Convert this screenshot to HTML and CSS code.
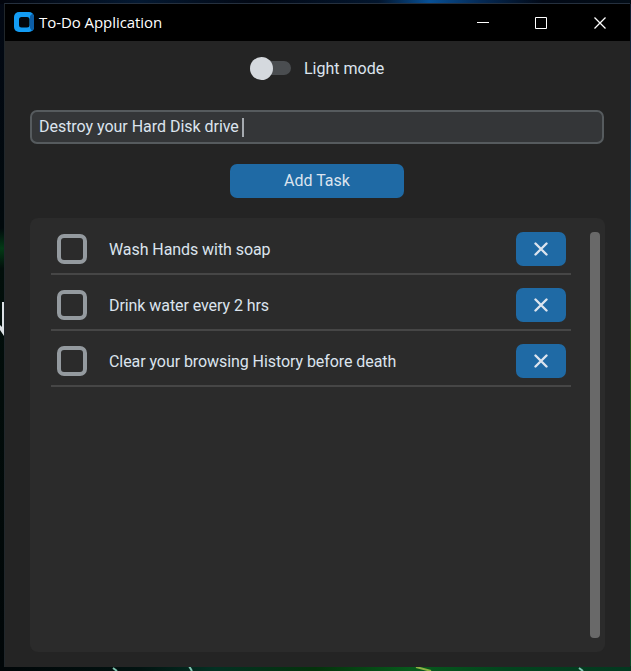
FILE: index.html
```
<!DOCTYPE html>
<html lang="en">
<head>
<meta charset="utf-8">
<title>To-Do Application</title>
<link rel="stylesheet" href="styles.css">
</head>
<body>
<svg class="wallpaper" viewBox="0 0 631 671" aria-hidden="true">
  <defs>
    <linearGradient id="top"><stop offset="0" stop-color="#01040c"/><stop offset=".22" stop-color="#041932"/><stop offset=".4" stop-color="#020814"/><stop offset=".6" stop-color="#03162e"/><stop offset=".68" stop-color="#075096"/><stop offset=".76" stop-color="#052b57"/><stop offset=".86" stop-color="#020916"/><stop offset="1" stop-color="#020c16"/></linearGradient>
    <linearGradient id="bottom"><stop offset="0" stop-color="#010608"/><stop offset=".22" stop-color="#021311"/><stop offset=".34" stop-color="#033123"/><stop offset=".5" stop-color="#04330c"/><stop offset=".65" stop-color="#075a1c"/><stop offset=".8" stop-color="#02451e"/><stop offset="1" stop-color="#033820"/></linearGradient>
    <linearGradient id="left" x2="0" y2="1"><stop offset="0" stop-color="#020814"/><stop offset=".34" stop-color="#01090c"/><stop offset=".37" stop-color="#033b16"/><stop offset=".4" stop-color="#020f0b"/><stop offset="1" stop-color="#010608"/></linearGradient>
    <linearGradient id="right" x2="0" y2="1"><stop offset="0" stop-color="#101a2c"/><stop offset=".35" stop-color="#14506a"/><stop offset=".5" stop-color="#244c1c"/><stop offset="1" stop-color="#0d4728"/></linearGradient>
  </defs>
  <path fill="url(#left)" d="M0 0h5v671H0z"/>
  <path fill="url(#right)" d="M629 0h2v671h-2z"/>
  <path fill="url(#top)" d="M0 0h631v4H0z"/>
  <path fill="url(#bottom)" d="M0 666h631v5H0z"/>
  <path fill="#dce0e4" d="M2 302h3v34H4L0 330v-5l2 2z"/>
  <path fill="none" stroke="#7fc4b0" stroke-width="2" d="M113 668l4 3M189 666l3 5M579 668l4 3"/>
  <path fill="none" stroke="#8fb345" stroke-width="2" d="M416 667l15 4"/>
</svg>
<main class="window">
  <header class="titlebar">
    <svg class="logo" viewBox="0 0 20 20" aria-hidden="true">
      <rect width="20" height="20" rx="5" fill="#139cf3"/>
      <path fill="#0c5da5" d="M16 4l2.500-2.500Q20 3 20 5v10q0 3-2 4l-2-3z"/>
      <rect x="5" y="5" width="10.500" height="10.500" rx="2.500" fill="#02070d"/>
    </svg>
    <h1>To-Do Application</h1>
    <svg class="controls" viewBox="0 0 131 14" aria-hidden="true">
      <path fill="none" stroke="#fff" d="M0 6.500h12M58.500 1.500h11v11h-11z"/>
      <path fill="none" stroke="#fff" stroke-width="1.300" d="M117.500 1.500l11 11M128.500 1.500l-11 11"/>
    </svg>
  </header>
  <div class="mode"><span class="switch"><span class="knob"></span></span><span class="mode-label">Light mode</span></div>
  <div class="entry"><span>Destroy your Hard Disk drive</span><span class="caret"></span></div>
  <button class="add">Add Task</button>
  <section class="panel">
    <ul class="tasks">
      <li><span class="check"></span><span class="label">Wash Hands with soap</span><button class="remove" aria-label="Remove"><svg viewBox="0 0 14 14"><path d="M1.500 1.500l11 11M12.500 1.500l-11 11"/></svg></button></li>
      <li><span class="check"></span><span class="label">Drink water every 2 hrs</span><button class="remove" aria-label="Remove"><svg viewBox="0 0 14 14"><path d="M1.500 1.500l11 11M12.500 1.500l-11 11"/></svg></button></li>
      <li><span class="check"></span><span class="label">Clear your browsing History before death</span><button class="remove" aria-label="Remove"><svg viewBox="0 0 14 14"><path d="M1.500 1.500l11 11M12.500 1.500l-11 11"/></svg></button></li>
    </ul>
    <div class="scrollbar"></div>
  </section>
</main>
</body>
</html>
```
FILE: styles.css
```
* { box-sizing: border-box; }
body {
  margin: 0;
  width: 631px;
  height: 671px;
  padding: 3px 1px 4px 4px;
  overflow: hidden;
  background: #01060c;
  color: #dce4ee;
  font: 16px/20px Roboto, sans-serif;
}
.wallpaper { position: absolute; inset: 0; width: 631px; height: 671px; z-index: -1; }
.window {
  height: 664px;
  display: flex;
  flex-direction: column;
  background: #242424;
  border-top: 1px solid #25303e;
  border-left: 1px solid #20262a;
}
.titlebar {
  height: 37px;
  flex: none;
  display: flex;
  align-items: center;
  padding: 0 22px 0 9px;
  background: #000;
  color: #fff;
}
.logo { width: 20px; height: 20px; margin-top: -1px; }
.titlebar h1 {
  margin: 0 auto 0 5px;
  padding-bottom: 2px;
  font: 400 15px/20px "Open Sans", sans-serif;
  letter-spacing: -0.06px;
}
.controls { width: 131px; height: 14px; }
.mode { display: flex; align-items: center; gap: 12px; height: 24px; margin: 15px 0 0 245px; }
.mode-label { padding: 2px 0 0 1px; }
.switch { display: flex; align-items: center; width: 41px; height: 14px; border-radius: 7px; background: #4a4d50; }
.knob { width: 23px; height: 23px; border-radius: 50%; background: #d5d9de; flex: none; }
.entry {
  display: flex;
  align-items: center;
  width: 574px;
  height: 34px;
  margin: 30px 0 0 25px;
  padding: 0 7px;
  border: 2px solid #565b5e;
  border-radius: 7px;
  background: #343638;
  letter-spacing: -0.03px;
}
.caret { width: 2px; height: 19px; margin-left: 3px; background: #a5aaaf; }
button { border: 0; padding: 0; border-radius: 7px; background: #1f6aa5; color: #dce4ee; font: inherit; }
.add { width: 174px; height: 34px; margin: 20px 0 0 225px; }
.panel {
  display: flex;
  justify-content: space-between;
  width: 575px;
  height: 434px;
  margin: 20px 0 0 25px;
  padding: 14px 5px 14px 21px;
  border-radius: 8px;
  background: #2b2b2b;
}
.tasks { width: 520px; margin: 0; padding: 0; list-style: none; }
.tasks li {
  display: flex;
  height: 43px;
  margin-bottom: 13px;
  padding: 0 5px 0 6px;
  border-bottom: 2px solid #464646;
}
.check { width: 30px; height: 30px; margin-top: 2px; border: 4px solid #949a9f; border-radius: 7px; }
.label { margin: 8px auto 0 22px; letter-spacing: -0.07px; }
.remove { display: flex; align-items: center; justify-content: center; width: 50px; height: 34px; }
.remove svg { width: 14px; height: 14px; margin-top: -1px; fill: none; stroke: #dce4ee; stroke-width: 2.4; stroke-linecap: round; }
.scrollbar { width: 10px; height: 406px; border-radius: 4px; background: #696969; }
```
